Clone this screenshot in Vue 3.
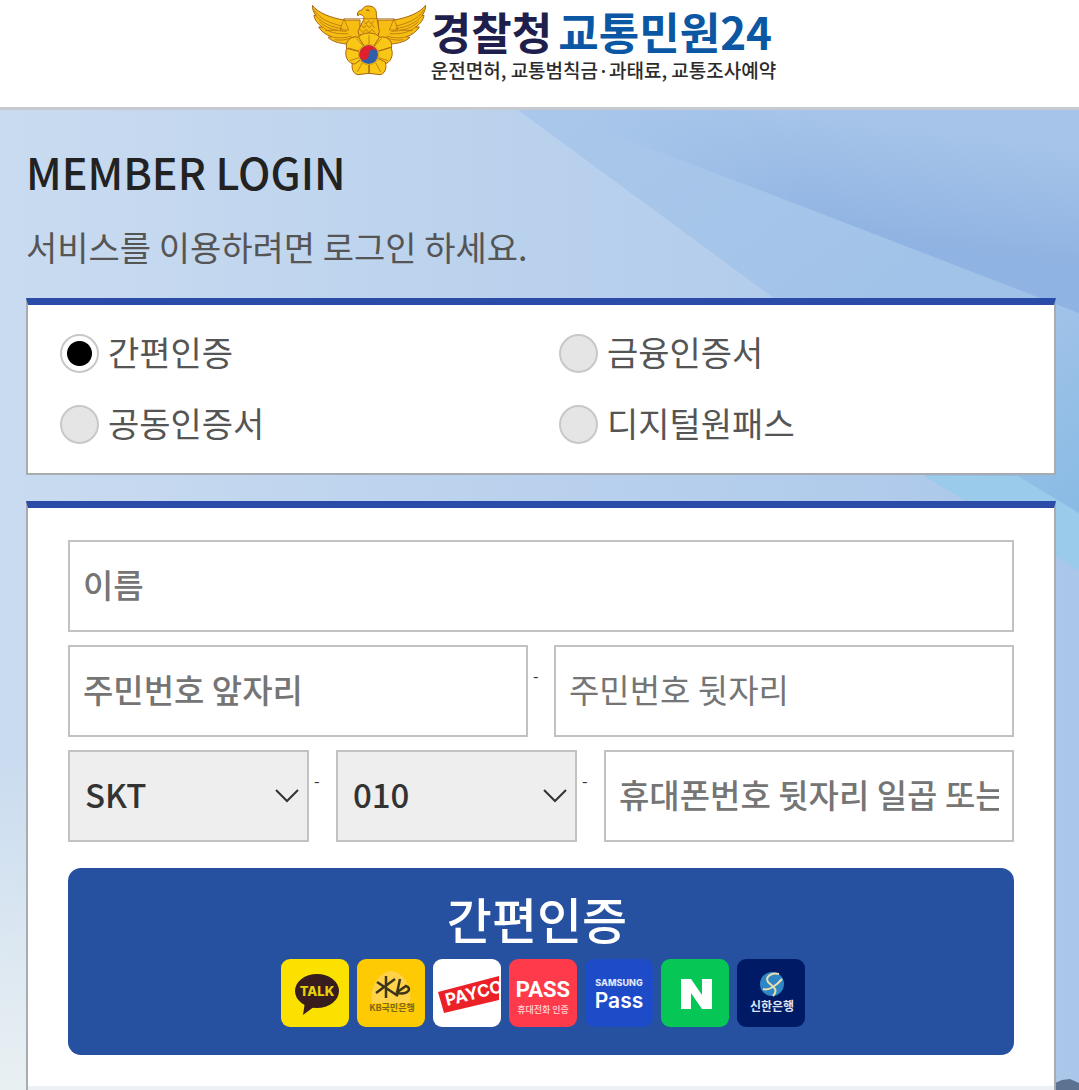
<script setup>
import { ref } from 'vue'

const methods = ['간편인증', '금융인증서', '공동인증서', '디지털원패스']
const method = ref('간편인증')
const carrier = ref('SKT')
const prefix = ref('010')
</script>

<template>
  <div class="page">
    <header class="header">
      <a class="brand" href="#">
        <svg class="emblem" viewBox="36 10 342 216" aria-hidden="true">
          <g fill="#f6bd12" stroke="#a8650f" stroke-width="3" stroke-linejoin="round">
            <path d="M37 14 C55 38 95 52 132 58 L180 58 L180 122 L148 130 C120 130 96 122 84 110 L94 108 C76 102 63 91 56 79 L67 79 C53 70 43 56 42 44 L48 45 C40 34 37 24 37 14Z" />
            <path d="M377 14 C359 38 319 52 282 58 L234 58 L234 122 L266 130 C294 130 318 122 330 110 L320 108 C338 102 351 91 358 79 L347 79 C361 70 371 56 372 44 L366 45 C374 34 377 24 377 14Z" />
            <path d="M172 40 C173 32 179 29 186 28 C190 17 202 14 213 17 C226 20 230 30 229 43 L238 92 L228 128 L184 128 L174 92 L188 62 C194 54 192 48 187 44 L178 40 L174 46Z" />
          </g>
          <g fill="none" stroke="#a8650f" stroke-width="2">
            <path d="M42 27 C62 58 92 68 126 76 M48 45 C68 69 96 80 128 84 M58 62 C78 83 105 91 140 92 M67 79 C88 96 112 101 145 99 M94 108 C112 113 132 113 154 106 M76 90 L112 88 M104 117 C120 120 140 118 158 110" />
            <path d="M372 27 C352 58 322 68 288 76 M366 45 C346 69 318 80 286 84 M356 62 C336 83 309 91 274 92 M347 79 C326 96 302 101 269 99 M320 108 C302 113 282 113 260 106 M338 90 L302 88 M310 117 C294 120 274 118 256 110" />
            <path d="M132 54 H282 M132 54 L120 88 H146Z M282 54 L268 88 H294Z M190 60 l8 10 8-10 8 10 8-10 M184 72 l8 10 8-10 8 10 8-10 8 10 M180 86 l9 10 9-10 9 10 9-10 9 10 M181 100 l9 10 9-10 9 10 9-10 9 10" />
            <path d="M199 28 l9 2" stroke-width="4" />
          </g>
          <g fill="#f9c817" stroke="#a8650f" stroke-width="3">
            <path d="M207 160 L174 112 C182 92 232 92 240 112Z" />
            <path d="M207 160 L238 110 C262 104 280 122 274 143Z" />
            <path d="M207 160 L272 140 C284 160 272 190 250 190Z" />
            <path d="M207 160 L256 184 C262 206 252 221 240 222 L207 218Z" />
            <path d="M207 160 L158 184 C152 206 162 221 174 222 L207 218Z" />
            <path d="M207 160 L142 140 C130 160 142 190 164 190Z" />
            <path d="M207 160 L176 110 C152 104 134 122 140 143Z" />
          </g>
          <path d="M207 130V104 M224 136L244 114 M237 151L268 142 M238 171L264 180 M227 186L242 214 M207 192V216 M187 186L172 214 M176 171L150 180 M177 151L146 142 M190 136L170 114" stroke="#a8650f" stroke-width="2" />
          <circle cx="206" cy="162" r="31" fill="#f6bd12" stroke="#a8650f" stroke-width="1" />
          <circle cx="206" cy="162" r="28" fill="#2e5fa8" />
          <path d="M178 162a28 28 0 0 1 56 0a14 14 0 0 0-28 0a14 14 0 0 1-28 0Z" fill="#e21f2d" transform="rotate(-8 206 162)" />
        </svg>
        <span class="brand-text">
          <span class="brand-name"><span>경찰청</span><span class="service">교통민원24</span></span>
          <span class="brand-sub">운전면허, 교통범칙금·과태료, 교통조사예약</span>
        </span>
      </a>
    </header>

    <main class="main">
      <svg class="backdrop" viewBox="0 0 1079 980" preserveAspectRatio="none" aria-hidden="true">
        <defs>
          <linearGradient id="base" x1="0" y1="0" x2="1" y2="0">
            <stop offset="0" stop-color="#c9dbf0" />
            <stop offset="1" stop-color="#aac7ea" />
          </linearGradient>
          <linearGradient id="band" gradientUnits="userSpaceOnUse" x1="900" y1="15" x2="885" y2="130">
            <stop offset="0" stop-color="#a6c4e9" />
            <stop offset="1" stop-color="#8fb3e2" />
          </linearGradient>
          <linearGradient id="reveal" gradientUnits="userSpaceOnUse" x1="600" y1="0" x2="800" y2="0">
            <stop offset="0" stop-color="#fff" stop-opacity="0" />
            <stop offset="1" stop-color="#fff" />
          </linearGradient>
          <mask id="reveal-mask" maskUnits="userSpaceOnUse" x="0" y="0" width="1079" height="980">
            <rect width="1079" height="980" fill="url(#reveal)" />
          </mask>
          <linearGradient id="ray" x1="0" y1="0" x2="1" y2="1">
            <stop offset="0" stop-color="#a9c7ea" />
            <stop offset="0.7" stop-color="#a0c2e8" />
            <stop offset="1" stop-color="#82b9e3" />
          </linearGradient>
          <linearGradient id="fade" x1="0" y1="0" x2="0" y2="1">
            <stop offset="0.65" stop-color="#e9f0f2" stop-opacity="0" />
            <stop offset="1" stop-color="#e9f0f2" />
          </linearGradient>
        </defs>
        <rect width="1079" height="980" fill="url(#base)" />
        <path d="M518 0H1079V460L925 366L775 189Z" fill="url(#ray)" />
        <path d="M548 0H1079V203L760 80Z" fill="url(#band)" mask="url(#reveal-mask)" />
        <path d="M925 366H1018L1079 403V461Z" fill="#9acbea" />
        <rect width="200" height="980" fill="url(#fade)" />
        <path d="M1055 980V973L1062 970L1070 969L1079 973V980Z" fill="#5d7291" />
      </svg>

      <h1 class="title">MEMBER LOGIN</h1>
      <p class="lead">서비스를 이용하려면 로그인 하세요.</p>

      <div class="card methods" role="radiogroup" aria-label="인증 방법">
        <label v-for="m in methods" :key="m" class="method">
          <input v-model="method" type="radio" name="method" :value="m" />
          <span>{{ m }}</span>
        </label>
      </div>

      <form class="card login" @submit.prevent>
        <div class="fields">
          <input class="field" type="text" placeholder="이름" aria-label="이름" />
          <div class="row id-row">
            <input class="field" type="text" placeholder="주민번호 앞자리" aria-label="주민번호 앞자리" />
            <span class="dash">-</span>
            <input class="field light" type="password" placeholder="주민번호 뒷자리" aria-label="주민번호 뒷자리" />
          </div>
          <div class="row phone-row">
            <span class="select">
              <select v-model="carrier" class="field" aria-label="통신사">
                <option>SKT</option>
                <option>KT</option>
                <option>LGU+</option>
              </select>
              <svg viewBox="0 0 24 14" aria-hidden="true"><path d="M1 1L12 12L23 1" /></svg>
            </span>
            <span class="dash">-</span>
            <span class="select">
              <select v-model="prefix" class="field" aria-label="휴대폰 앞번호">
                <option>010</option>
                <option>011</option>
                <option>016</option>
              </select>
              <svg viewBox="0 0 24 14" aria-hidden="true"><path d="M1 1L12 12L23 1" /></svg>
            </span>
            <span class="dash">-</span>
            <input class="field" type="tel" placeholder="휴대폰번호 뒷자리 일곱 또는 여덟자리" aria-label="휴대폰번호 뒷자리" />
          </div>
          <button class="submit" type="submit">
            <span class="submit-label">간편인증</span>
            <span class="providers">
              <svg viewBox="0 0 68 68">
                <rect width="68" height="68" rx="9" fill="#fae100" />
                <ellipse cx="36" cy="32" rx="22" ry="17" fill="#371d1e" />
                <path d="M24 43L22 56L34 47Z" fill="#371d1e" />
                <text class="latin" x="36" y="37" font-size="13" font-weight="800" fill="#e8d10a" text-anchor="middle">TALK</text>
              </svg>
              <svg viewBox="0 0 68 68">
                <rect width="68" height="68" rx="9" fill="#fdca04" />
                <path d="M15 44C12 26 24 12 34 12S56 26 53 44Z" fill="#ffd24a" />
                <path d="M20 23L41 37M19 34L38 20M29 17V39M43 20L40 34M39 34L49 27C55 29 52 36 40 34" fill="none" stroke="#3d3519" stroke-width="2.500" />
                <text x="35" y="52" font-size="9" font-weight="700" fill="#80651c" text-anchor="middle">KB국민은행</text>
              </svg>
              <svg viewBox="0 0 68 68">
                <rect width="68" height="68" rx="9" fill="#fff" />
                <path d="M5 33L66 17V41L11 54Z" fill="#ec2127" />
                <svg width="66" height="68"><text class="latin" x="14" y="47" font-size="17" font-weight="700" fill="#fff" transform="rotate(-14 14 47)">PAYCO</text></svg>
              </svg>
              <svg viewBox="0 0 68 68">
                <rect width="68" height="68" rx="9" fill="#ff3b4b" />
                <text class="narrow" x="34" y="38" font-size="22" fill="#fff" text-anchor="middle">PASS</text>
                <text x="34" y="54" font-size="9" font-weight="500" fill="#ffd5d8" text-anchor="middle">휴대전화 인증</text>
              </svg>
              <svg viewBox="0 0 68 68">
                <rect width="68" height="68" rx="9" fill="#1e4bc8" />
                <text class="latin" x="34" y="27" font-size="9" font-weight="800" fill="#dfe6fa" text-anchor="middle">SAMSUNG</text>
                <text class="latin" x="34" y="49" font-size="21" font-weight="600" fill="#fff" text-anchor="middle">Pass</text>
              </svg>
              <svg viewBox="0 0 68 68">
                <rect width="68" height="68" rx="9" fill="#06c755" />
                <path d="M20 20H30L41 36V20H51V50H41L30 34V50H20Z" fill="#fff" />
              </svg>
              <svg viewBox="0 0 68 68">
                <rect width="68" height="68" rx="9" fill="#001a66" />
                <circle cx="35" cy="25" r="12" fill="#2f86c4" />
                <path d="M42 15C34 13 28 18 31 23C36 28 42 30 36 37M26 30C32 32 40 26 45 20" fill="none" stroke="#e8dfae" stroke-width="2" />
                <text x="35" y="52" font-size="12" font-weight="700" fill="#dfe4f2" text-anchor="middle">신한은행</text>
              </svg>
            </span>
          </button>
        </div>
        <div class="foot"></div>
      </form>
    </main>
  </div>
</template>

<style>
body {
  margin: 0;
}
</style>

<style scoped>
.page {
  box-sizing: border-box;
  display: flex;
  flex-direction: column;
  min-height: 100vh;
  background: #fff;
  color: #555;
  font-family: "Noto Sans CJK KR", sans-serif;
}
.page * {
  box-sizing: border-box;
}
.header {
  display: flex;
  justify-content: center;
  height: 110px;
  padding: 3px 0 0 9px;
  border-bottom: 3px solid #c6cad0;
}
.brand {
  display: flex;
  align-items: flex-start;
  gap: 5px;
  color: #1f1f4d;
  text-decoration: none;
}
.emblem {
  width: 114px;
  height: 74px;
}
.brand-text {
  display: flex;
  flex-direction: column;
}
.brand-name {
  display: flex;
  gap: 6px;
  font-size: 44px;
  font-weight: 700;
  line-height: 56px;
}
.service {
  color: #0b57a4;
}
.brand-sub {
  color: #2b2b2b;
  font-size: 19px;
  font-weight: 500;
  line-height: 22px;
}
.main {
  position: relative;
  isolation: isolate;
  display: flex;
  flex: 1;
  flex-direction: column;
  padding: 33px 23px 0 26px;
}
.backdrop {
  position: absolute;
  z-index: -1;
  inset: 0;
  width: 100%;
  height: 100%;
}
.title {
  margin: 0;
  color: #222;
  font-size: 43px;
  font-weight: 500;
  line-height: 56px;
}
.lead {
  margin: 23px 0 26px;
  font-size: 34px;
  line-height: 50px;
}
.card {
  border: 2px solid #a8acb0;
  border-top: 7px solid #2b4ba8;
  background: #fff;
}
.methods {
  display: grid;
  grid-template-columns: 1fr 1fr;
  gap: 20px 4px;
  margin-bottom: 26px;
  padding: 23px 0 23px 32px;
}
.method {
  display: flex;
  align-items: center;
  gap: 9px;
  height: 51px;
  font-size: 34px;
  line-height: 48px;
}
.method span {
  padding-bottom: 3px;
}
.method input {
  appearance: none;
  width: 39px;
  height: 39px;
  margin: 0;
  border: 2px solid #c8c8c8;
  border-radius: 50%;
  background: #e5e5e5;
}
.method input:checked {
  background: radial-gradient(circle, #000 12px, #fff 13px);
}
.login {
  display: flex;
  flex: 1;
  flex-direction: column;
  border-bottom: 0;
}
.fields {
  display: flex;
  flex-direction: column;
  gap: 13px;
  padding: 32px 40px 31px;
}
.row {
  display: grid;
}
.id-row {
  grid-template-columns: 1fr 26px 1fr;
}
.phone-row {
  grid-template-columns: 241fr 27px 241fr 27px 410fr;
}
.field {
  width: 100%;
  min-width: 0;
  height: 92px;
  padding: 0 13px 4px;
  border: 2px solid #c2c2c2;
  border-radius: 0;
  background: #fff;
  color: #333;
  font-family: inherit;
  font-size: 33px;
  font-weight: 500;
}
.field::placeholder {
  color: #757575;
  opacity: 1;
}
.light {
  font-weight: 400;
}
.select {
  position: relative;
}
.select .field {
  appearance: none;
  padding: 0 15px 4px;
  background: #eee;
}
.select svg {
  position: absolute;
  top: 39px;
  right: 10px;
  width: 24px;
  height: 14px;
  fill: none;
  stroke: #333;
  stroke-width: 2;
  pointer-events: none;
}
.dash {
  padding: 18px 0 0 5px;
  color: #333;
  font-size: 16px;
  line-height: 24px;
}
.submit {
  display: flex;
  flex-direction: column;
  align-items: center;
  margin-top: 13px;
  padding: 20px 0 28px;
  border: 0;
  border-radius: 13px;
  background: #2650a0;
  color: #fff;
  font-family: inherit;
  font-size: 49px;
  font-weight: 500;
  line-height: 60px;
}
.submit-label {
  padding-right: 8px;
}
.providers {
  display: flex;
  gap: 8px;
  margin-top: 11px;
  padding-left: 3px;
}
.providers > svg {
  width: 68px;
  height: 68px;
}
.latin {
  font-family: Inter, "Liberation Sans", sans-serif;
}
.narrow {
  font-family: "Liberation Sans Narrow", Roboto, sans-serif;
  font-weight: 700;
}
.foot {
  flex: 1;
  min-height: 4px;
  background: #edf1f6;
}
</style>
